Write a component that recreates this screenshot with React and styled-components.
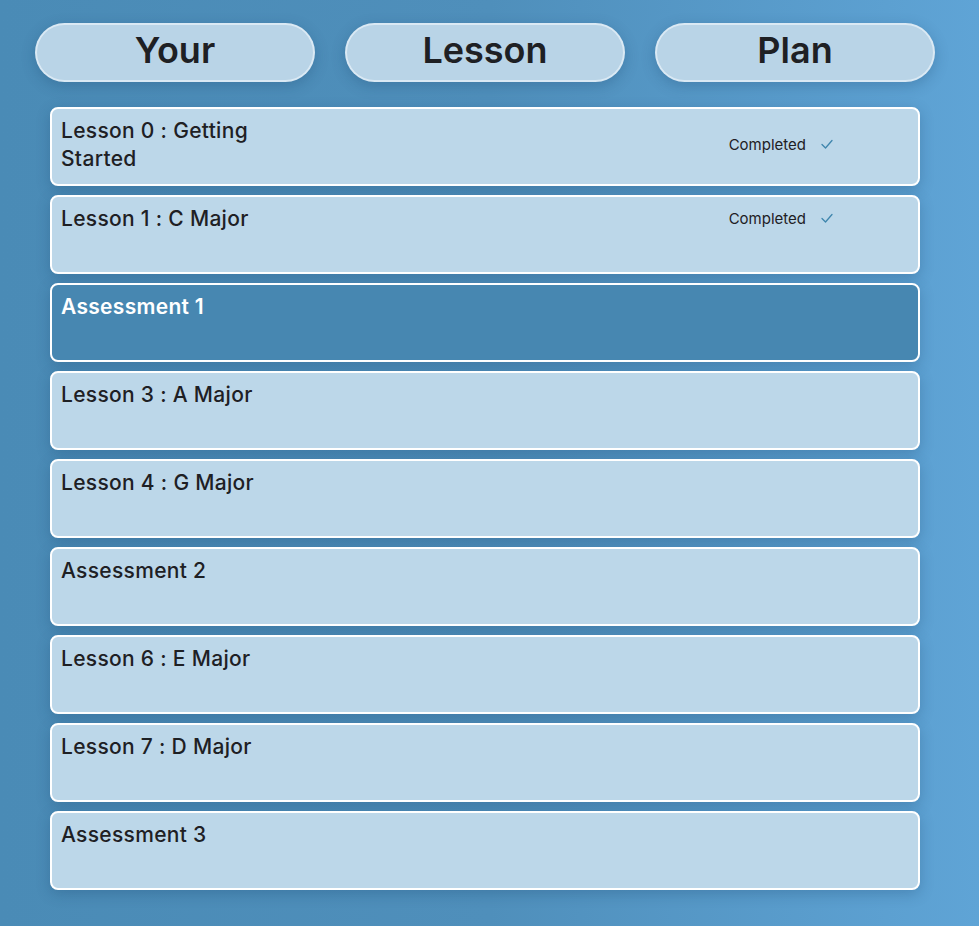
import React from "react";
import styled, { createGlobalStyle } from "styled-components";

const GlobalStyle = createGlobalStyle`
  html, body {
    margin: 0;
    padding: 0;
  }
  body {
    font-family: Inter, "Noto Sans", sans-serif;
    background: linear-gradient(90deg, #4a8bb6 0%, #4f8fbb 50%, #5fa4d6 100%);
    min-height: 926px;
  }
`;

const lessons = [
  { title: "Lesson 0 : Getting Started", done: true },
  { title: "Lesson 1 : C Major", done: true },
  { title: "Assessment 1", active: true },
  { title: "Lesson 3 : A Major" },
  { title: "Lesson 4 : G Major" },
  { title: "Assessment 2" },
  { title: "Lesson 6 : E Major" },
  { title: "Lesson 7 : D Major" },
  { title: "Assessment 3" },
];

function Check() {
  return (
    <svg width="14" height="14" viewBox="0 0 14 14" fill="none">
      <path
        d="M2 7.5 L5.5 11 L12 3.5"
        stroke="#3f86ad"
        strokeWidth="1.3"
        strokeLinecap="round"
        strokeLinejoin="round"
      />
    </svg>
  );
}

function App() {
  return (
    <>
      <GlobalStyle />
      <Page>
        <Header>
          <Pill>Your</Pill>
          <Pill>Lesson</Pill>
          <Pill>Plan</Pill>
        </Header>
        <List>
          {lessons.map((l, idx) => (
            <Row key={idx} $active={l.active}>
              <Content>
                <Title>{l.title}</Title>
                {l.done && (
                  <Status>
                    Completed
                    <Check />
                  </Status>
                )}
              </Content>
            </Row>
          ))}
        </List>
      </Page>
    </>
  );
}

const Page = styled.div`
  padding: 23px 44px 36px 35px;
`;

const Header = styled.div`
  display: grid;
  grid-template-columns: repeat(3, 280px);
  gap: 30px;
  margin-bottom: 25px;
`;

const Pill = styled.div`
  box-sizing: border-box;
  height: 59px;
  padding-bottom: 5px;
  border-radius: 30px;
  background: #b9d4e7;
  border: 2px solid rgba(230, 240, 248, 0.75);
  box-shadow: 0 4px 14px rgba(20, 60, 100, 0.25);
  display: flex;
  align-items: center;
  justify-content: center;
  font-size: 36px;
  font-weight: 600;
  color: #1e2024;
`;

const List = styled.div`
  margin-left: 15px;
  width: 870px;
  display: flex;
  flex-direction: column;
  gap: 9px;
`;

const Row = styled.div`
  box-sizing: border-box;
  height: 79px;
  border: 2px solid #ffffff;
  border-radius: 8px;
  background: ${({ $active }) => ($active ? "#4787b1" : "#bcd7e9")};
  color: ${({ $active }) => ($active ? "#ffffff" : "#1e2024")};
  font-weight: ${({ $active }) => ($active ? 600 : 500)};
  box-shadow: 0 4px 14px rgba(20, 60, 100, 0.25);
  padding: 8px 9px;
`;

const Content = styled.div`
  display: flex;
  align-items: center;
`;

const Title = styled.div`
  width: 250px;
  font-size: 21px;
  line-height: 28px;
  letter-spacing: 0.3px;
`;

const Status = styled.div`
  margin: 0 75px 2px auto;
  display: flex;
  align-items: center;
  gap: 14px;
  font-size: 15px;
  font-weight: 400;
  color: #1e2024;
`;

export default App;
